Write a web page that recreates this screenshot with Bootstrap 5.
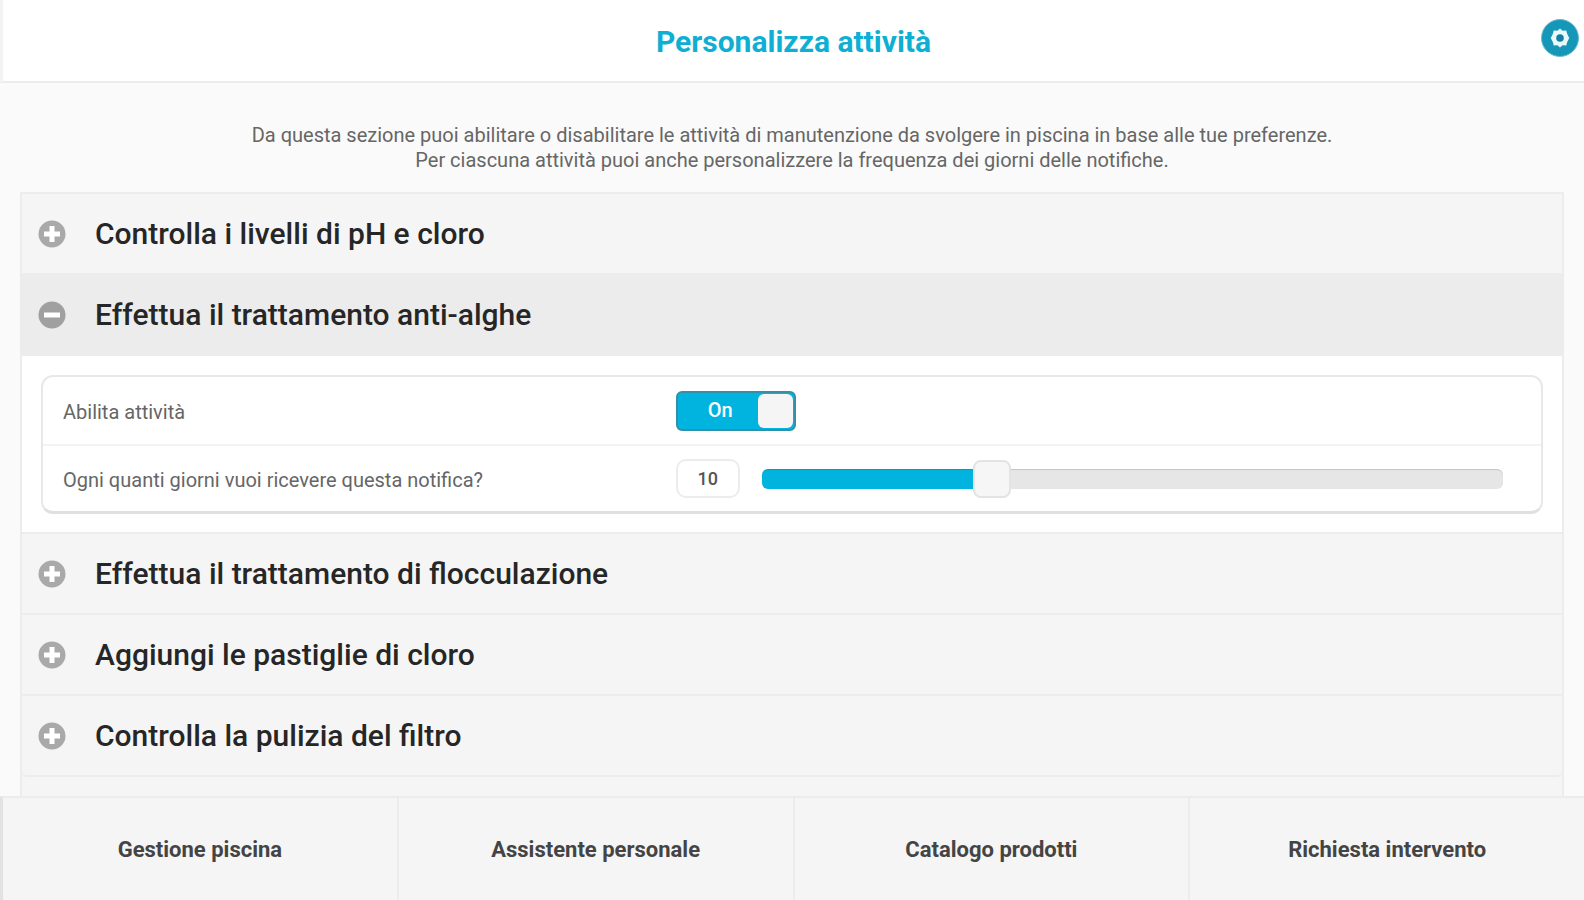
<!DOCTYPE html>
<html lang="it">
<head>
<meta charset="utf-8">
<meta name="viewport" content="width=device-width, initial-scale=1">
<title>Personalizza attività</title>
<link href="https://cdn.jsdelivr.net/npm/bootstrap@5.3.0/dist/css/bootstrap.min.css" rel="stylesheet">
<style>
  :root { --brand: #00b4df; --line: #ececec; --row: #f5f5f5; }
  body { font-family: Roboto, "Liberation Sans", sans-serif; background: #fafafa; color: #666; font-size: 20px; line-height: 25px; }
  .top-bar { background: #fff; border-bottom: 2px solid var(--line); border-left: 3px solid #f3f3f3; min-height: 83px; padding-top: 3px; }
  .top-bar h1 { color: #0fafd3; font-size: 30px; line-height: 36px; font-weight: 700; }
  .settings { right: 4px; top: 18px; width: 40px; height: 40px; }
  .intro { padding: 40px 20px 19px; }
  .tasks { margin: 0 20px; border: 2px solid var(--line); border-bottom: 0; background: var(--row); }
  .tasks .accordion-item { background: transparent; border: 0; border-radius: 0; color: inherit; }
  .tasks .accordion-button { height: 81px; padding: 0 16px; gap: 29px; background: var(--row); color: #262626; font-size: 30px; line-height: 36px; font-weight: 500; border-radius: 0; box-shadow: none; border-bottom: 2px solid var(--line); }
  .tasks .accordion-button::after { display: none; }
  .tasks .accordion-button:not(.collapsed) { background: var(--line); }
  .tasks .accordion-button:not(.collapsed) .bar-v { display: none; }
  .tasks .accordion-body { background: #fff; padding: 19px 19px 18px; border-bottom: 2px solid var(--line); }
  .options { border: 2px solid #e8e8e8; border-bottom: 3px solid #e0e0e0; border-radius: 12px; }
  .option { min-height: 67px; padding: 0 38px 0 20px; }
  .option + .option { border-top: 2px solid #f3f3f3; }
  .option-name { width: 42%; padding-top: 4px; }
  .toggle { display: grid; width: 120px; height: 40px; cursor: pointer; }
  .toggle > * { grid-area: 1 / 1; }
  .toggle input { appearance: none; width: 100%; height: 100%; margin: 0; display: flex; padding: 1px; background: #bbb; border: 2px solid #3390aa; border-radius: 6px; }
  .toggle input:checked { background: var(--brand); justify-content: flex-end; }
  .toggle input::before { content: ""; width: 35px; background: #f5f5f5; border-radius: 6px; }
  .toggle span { z-index: 1; padding-left: 32px; color: #fff; font-size: 20px; font-weight: 500; align-self: center; pointer-events: none; }
  .toggle input:not(:checked) + span { visibility: hidden; }
  .controls { gap: 22px; }
  .days { width: 64px; height: 39px; border: 2px solid var(--line); border-radius: 10px; text-align: center; font-size: 18px; color: #555; font-weight: 500; background: #fff; }
  .slider { appearance: none; height: 40px; margin: 0; background: transparent; }
  .slider::-webkit-slider-runnable-track { height: 20px; border-radius: 6px; box-shadow: inset 0 1px 1px rgba(0, 0, 0, .15); background: linear-gradient(to right, var(--brand) var(--fill), #e6e6e6 var(--fill)); }
  .slider::-webkit-slider-thumb { appearance: none; width: 38px; height: 38px; margin-top: -9px; background: #f6f6f6; border: 2px solid #e3e3e3; border-radius: 8px; }
  .bottom-nav { background: var(--row); border-top: 2px solid var(--line); border-left: 3px solid #e2e2e2; height: 104px; }
  .bottom-nav a { color: #444; font-size: 22px; font-weight: 700; text-decoration: none; }
  .bottom-nav a + a { border-left: 2px solid var(--line); }
</style>
</head>
<body class="vh-100 d-flex flex-column overflow-hidden">
<header class="top-bar position-relative d-flex align-items-center justify-content-center flex-shrink-0">
  <h1 class="m-0">Personalizza attività</h1>
  <button type="button" class="settings btn p-0 border-0 position-absolute d-flex" aria-label="Impostazioni">
    <svg viewBox="0 0 40 40" width="40" height="40" aria-hidden="true">
      <circle cx="20" cy="20" r="18.500" fill="#1697b8" stroke="#69bccf"/>
      <path fill="#eafafa" d="M20 10.500l2.600 2.300 3.600-.4 1 3.600 2 4-2 4-1 3.600-3.600-.4-2.600 2.300-2.600-2.300-3.600.4-1-3.600-2-4 2-4 1-3.600 3.600.4z"/>
      <circle cx="20" cy="20" r="3.800" fill="#12809f"/>
    </svg>
  </button>
</header>

<main class="flex-grow-1 d-flex flex-column overflow-hidden">
  <p class="intro text-center m-0">Da questa sezione puoi abilitare o disabilitare le attività di manutenzione da svolgere in piscina in base alle tue preferenze.<br>Per ciascuna attività puoi anche personalizzere la frequenza dei giorni delle notifiche.</p>

  <div class="tasks accordion flex-grow-1" id="tasks">
    <section class="accordion-item">
      <h2 class="accordion-header"><button class="accordion-button collapsed" type="button">
        <svg width="28" height="28" viewBox="0 0 28 28" aria-hidden="true"><circle cx="14" cy="14" r="13.500" fill="#a9a9a9"/><path d="M6 14h16" stroke="#fff" stroke-width="5"/><path class="bar-v" d="M14 6v16" stroke="#fff" stroke-width="5"/></svg>
        Controlla i livelli di pH e cloro</button></h2>
    </section>
    <section class="accordion-item">
      <h2 class="accordion-header"><button class="accordion-button" type="button" data-bs-toggle="collapse" data-bs-target="#anti-alghe" aria-expanded="true" aria-controls="anti-alghe">
        <svg width="28" height="28" viewBox="0 0 28 28" aria-hidden="true"><circle cx="14" cy="14" r="13.500" fill="#a0a0a0"/><path d="M6 14h16" stroke="#fff" stroke-width="5"/><path class="bar-v" d="M14 6v16" stroke="#fff" stroke-width="5"/></svg>
        Effettua il trattamento anti-alghe</button></h2>
      <div id="anti-alghe" class="accordion-collapse collapse show">
        <div class="accordion-body">
          <div class="options">
            <div class="option d-flex align-items-center">
              <label class="option-name me-2" for="enabled">Abilita attività</label>
              <label class="toggle"><input type="checkbox" role="switch" id="enabled" checked><span>On</span></label>
            </div>
            <div class="option d-flex align-items-center">
              <label class="option-name me-2" for="days">Ogni quanti giorni vuoi ricevere questa notifica?</label>
              <div class="controls d-flex align-items-center flex-grow-1">
                <input class="days" id="days" type="text" inputmode="numeric" value="10">
                <input class="slider flex-grow-1" id="range" type="range" min="1" max="31" value="10" aria-label="Giorni" style="--fill: 30%">
              </div>
            </div>
          </div>
        </div>
      </div>
    </section>
    <section class="accordion-item">
      <h2 class="accordion-header"><button class="accordion-button collapsed" type="button">
        <svg width="28" height="28" viewBox="0 0 28 28" aria-hidden="true"><circle cx="14" cy="14" r="13.500" fill="#a9a9a9"/><path d="M6 14h16" stroke="#fff" stroke-width="5"/><path class="bar-v" d="M14 6v16" stroke="#fff" stroke-width="5"/></svg>
        Effettua il trattamento di flocculazione</button></h2>
    </section>
    <section class="accordion-item">
      <h2 class="accordion-header"><button class="accordion-button collapsed" type="button">
        <svg width="28" height="28" viewBox="0 0 28 28" aria-hidden="true"><circle cx="14" cy="14" r="13.500" fill="#a9a9a9"/><path d="M6 14h16" stroke="#fff" stroke-width="5"/><path class="bar-v" d="M14 6v16" stroke="#fff" stroke-width="5"/></svg>
        Aggiungi le pastiglie di cloro</button></h2>
    </section>
    <section class="accordion-item">
      <h2 class="accordion-header"><button class="accordion-button collapsed" type="button">
        <svg width="28" height="28" viewBox="0 0 28 28" aria-hidden="true"><circle cx="14" cy="14" r="13.500" fill="#a9a9a9"/><path d="M6 14h16" stroke="#fff" stroke-width="5"/><path class="bar-v" d="M14 6v16" stroke="#fff" stroke-width="5"/></svg>
        Controlla la pulizia del filtro</button></h2>
    </section>
  </div>
</main>

<nav class="bottom-nav d-flex flex-shrink-0" aria-label="Principale">
  <a href="#" class="col d-flex align-items-center justify-content-center">Gestione piscina</a>
  <a href="#" class="col d-flex align-items-center justify-content-center">Assistente personale</a>
  <a href="#" class="col d-flex align-items-center justify-content-center">Catalogo prodotti</a>
  <a href="#" class="col d-flex align-items-center justify-content-center">Richiesta intervento</a>
</nav>
<script src="https://cdn.jsdelivr.net/npm/bootstrap@5.3.0/dist/js/bootstrap.bundle.min.js"></script>
<script>
  const range = document.getElementById('range');
  const days = document.getElementById('days');
  const paint = () => range.style.setProperty('--fill', (range.value - range.min) / (range.max - range.min) * 100 + '%');
  range.addEventListener('input', () => { days.value = range.value; paint(); });
  days.addEventListener('change', () => { range.value = days.value; paint(); });
</script>
</body>
</html>
